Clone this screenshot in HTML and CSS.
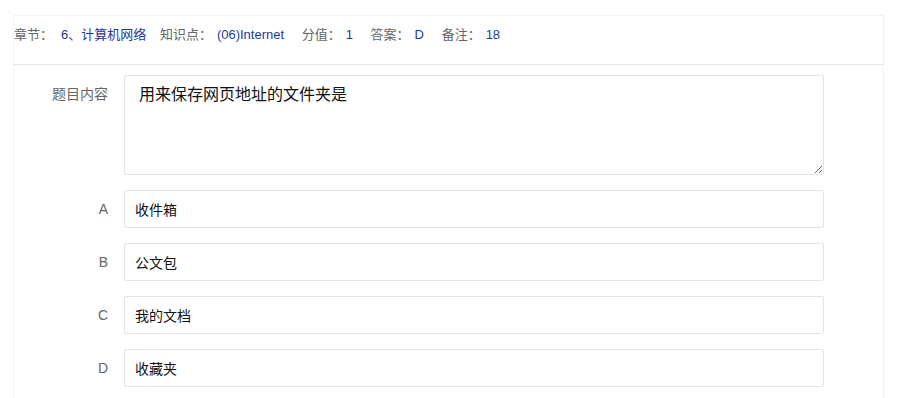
FILE: index.html
```html
<!DOCTYPE html>
<html lang="zh-CN">
<head>
  <meta charset="UTF-8" />
  <title>题目详情</title>
  <link rel="stylesheet" href="styles.css">
</head>
<body>
  <div class="card">
    <div class="info">
      <span class="key">章节：</span><span class="val first">6、计算机网络</span>
      <span class="key">知识点：</span><span class="val">(06)Internet</span>
      <span class="key">分值：</span><span class="val">1</span>
      <span class="key">答案：</span><span class="val">D</span>
      <span class="key">备注：</span><span class="val">18</span>
    </div>

    <div class="form">
      <div class="row">
        <label class="label">题目内容</label>
        <textarea class="content" readonly>用来保存网页地址的文件夹是</textarea>
      </div>
      <div class="row">
        <label class="label">A</label>
        <input class="option" type="text" value="收件箱" readonly />
      </div>
      <div class="row">
        <label class="label">B</label>
        <input class="option" type="text" value="公文包" readonly />
      </div>
      <div class="row">
        <label class="label">C</label>
        <input class="option" type="text" value="我的文档" readonly />
      </div>
      <div class="row">
        <label class="label">D</label>
        <input class="option" type="text" value="收藏夹" readonly />
      </div>
    </div>
  </div>
</body>
</html>
```

FILE: styles.css
```css
body {
  margin: 0;
  font-family: "Liberation Sans", "Noto Sans CJK SC", sans-serif;
  background: #fff;
}
.card {
  margin: 15px 0 0 13px;
  width: 871px;
  height: 400px;
  border: 1px solid #f4f4f4;
  border-bottom: none;
  box-sizing: border-box;
}
.info {
  height: 49px;
  padding-top: 11px;
  box-sizing: border-box;
  border-bottom: 1px solid #e6e6e6;
  font-size: 13px;
  line-height: 16px;
  white-space: nowrap;
}
.key {
  color: #666;
  margin-right: 5px;
}
.val {
  color: #1c3a9e;
  margin-right: 14px;
}
.val.first {
  margin-left: 3px;
  margin-right: 10px;
}
.form {
  padding-top: 10px;
  display: flex;
  flex-direction: column;
  gap: 15px;
}
.row {
  display: flex;
  align-items: flex-start;
}
.label {
  width: 110px;
  padding-right: 16px;
  box-sizing: border-box;
  text-align: right;
  font-size: 14px;
  line-height: 38px;
  color: #666;
}
.content, .option {
  width: 700px;
  border: 1px solid #e4e4e4;
  border-radius: 2px;
  box-sizing: border-box;
  font-family: "Liberation Sans", "Noto Sans CJK SC", sans-serif;
  color: #111;
  outline: none;
}
.content {
  height: 100px;
  padding: 7px 14px;
  font-size: 16px;
  line-height: 24px;
}
.option {
  height: 38px;
  padding: 0 10px;
  font-size: 14px;
}
```
